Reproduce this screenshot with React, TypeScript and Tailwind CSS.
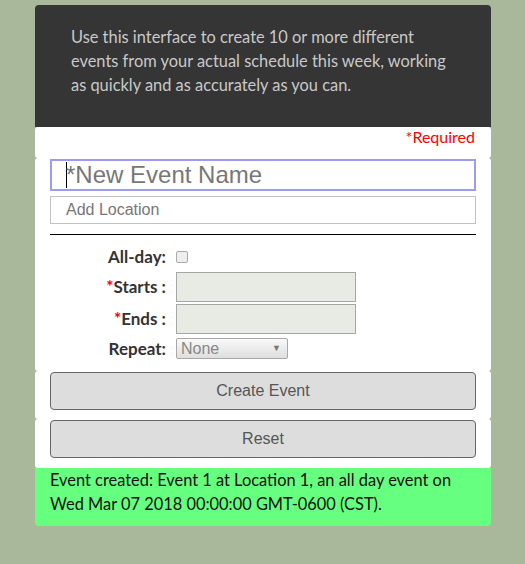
import React from "react";

export default function App() {
  const ub = { fontFamily: "Lato, 'Open Sans', sans-serif" };
  const arial = { fontFamily: "'Liberation Sans', Arial, sans-serif" };
  return (
    <div className="min-h-[564px] w-full bg-[#a9b79b] pt-[5px]" style={ub}>
      <div className="ml-[35px] w-[456px]">
        <div className="rounded-t-[4px] bg-[#353535] pl-[36px] pr-[20px] pt-[20px] pb-[30px] text-[16.4px] leading-[24px] text-[#c9c9c9]">
          Use this interface to create 10 or more different
          <br />
          events from your actual schedule this week, working
          <br />
          as quickly and as accurately as you can.
        </div>
        <div className="flex h-[31px] items-start justify-end rounded-[3px] bg-white pr-[16px] text-[16px] leading-[20px] text-[#ff0000]">
          *Required
        </div>
        <div className="rounded-[3px] bg-white px-[15px] pt-[1px] pb-[12px]">
          <div className="flex h-[32px] items-center border-2 border-[#9c9cf0] pl-[14px] text-[24px] text-[#777]" style={arial}>
            <span className="mr-[-1px] inline-block h-[26px] w-[1px] bg-black" />
            *New Event Name
          </div>
          <div className="mt-[5px] flex h-[28px] items-center border border-[#c2c2c2] pl-[15px] text-[16px] text-[#777]" style={arial}>
            Add Location
          </div>
          <div className="mt-[10px] h-px bg-black" />
          <div className="mt-[14px] flex flex-col gap-[2px] text-[17px] font-bold text-[#333]">
            <div className="flex h-[16px] items-center">
              <div className="w-[116px] text-right">All-day:</div>
              <div className="ml-[10px] h-[12px] w-[12px] rounded-[2px] border border-[#aaa] bg-[#eee]" />
            </div>
            <div className="mt-[5px] flex h-[30px] items-center">
              <div className="w-[116px] text-right">
                <span className="text-[#ff0000]">*</span>Starts :
              </div>
              <div className="ml-[10px] h-[30px] w-[180px] border border-[#a6a6a6] bg-[#e8ebe3]" />
            </div>
            <div className="flex h-[30px] items-center">
              <div className="w-[116px] text-right">
                <span className="text-[#ff0000]">*</span>Ends :
              </div>
              <div className="ml-[10px] h-[30px] w-[180px] border border-[#a6a6a6] bg-[#e8ebe3]" />
            </div>
            <div className="mt-[2px] flex h-[21px] items-center">
              <div className="w-[116px] text-right">Repeat:</div>
              <div
                className="ml-[10px] flex h-[21px] w-[112px] items-center justify-between rounded-[2px] border border-[#a8a8a8] bg-gradient-to-b from-[#fafafa] to-[#dedede] pl-[4px] pr-[6px] text-[16px] font-normal text-[#888]"
                style={arial}
              >
                <span>None</span>
                <span className="text-[9px] text-[#777]">▼</span>
              </div>
            </div>
          </div>
        </div>
        <div className="h-[48px] rounded-[3px] bg-white px-[15px] pt-[1px]">
          <div className="flex h-[38px] items-center justify-center rounded-[4px] border border-[#666] bg-[#dddddd] text-[16px] text-[#555]" style={arial}>
            Create Event
          </div>
        </div>
        <div className="h-[49px] rounded-[3px] bg-white px-[15px] pt-[1px]">
          <div className="flex h-[38px] items-center justify-center rounded-[4px] border border-[#666] bg-[#dddddd] text-[16px] text-[#555]" style={arial}>
            Reset
          </div>
        </div>
        <div className="rounded-b-[4px] bg-[#66ff7f] pl-[15px] pb-[10px] text-[16.4px] leading-[24px] text-[#111]">
          Event created: Event 1 at Location 1, an all day event on
          <br />
          Wed Mar 07 2018 00:00:00 GMT-0600 (CST).
        </div>
      </div>
    </div>
  );
}
